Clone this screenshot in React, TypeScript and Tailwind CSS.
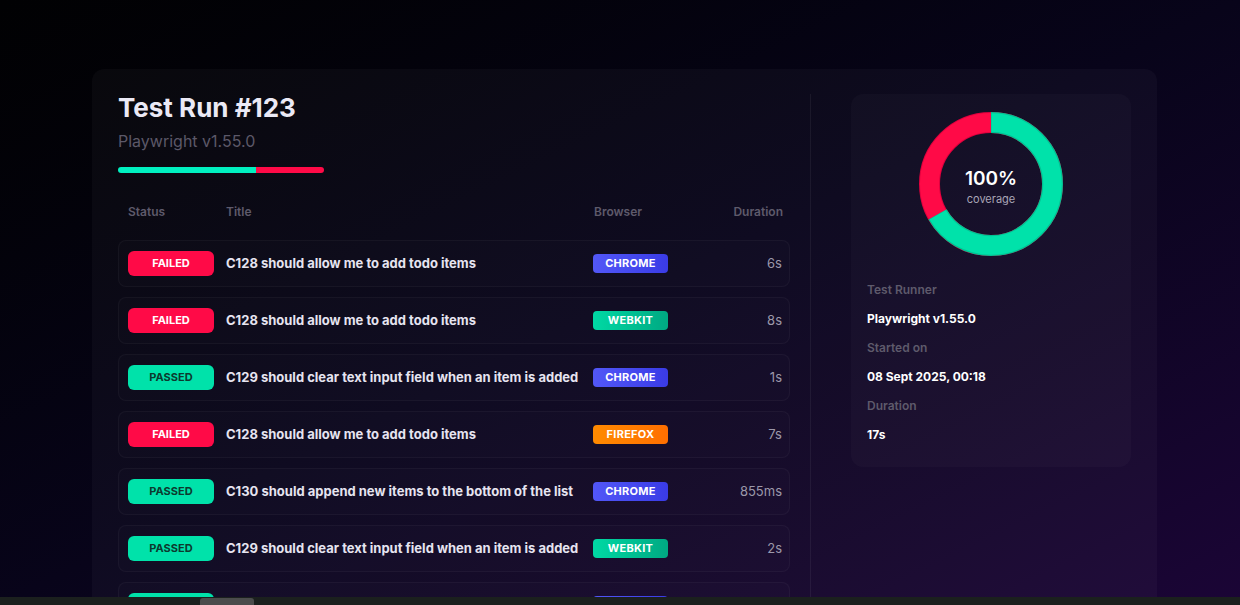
import React from "react";

interface TestRow {
    status: "FAILED" | "PASSED";
    title: string;
    browser: "CHROME" | "WEBKIT" | "FIREFOX";
    duration: string;
}

const rows: TestRow[] = [
    { status: "FAILED", title: "C128 should allow me to add todo items", browser: "CHROME", duration: "6s" },
    { status: "FAILED", title: "C128 should allow me to add todo items", browser: "WEBKIT", duration: "8s" },
    { status: "PASSED", title: "C129 should clear text input field when an item is added", browser: "CHROME", duration: "1s" },
    { status: "FAILED", title: "C128 should allow me to add todo items", browser: "FIREFOX", duration: "7s" },
    { status: "PASSED", title: "C130 should append new items to the bottom of the list", browser: "CHROME", duration: "855ms" },
    { status: "PASSED", title: "C129 should clear text input field when an item is added", browser: "WEBKIT", duration: "2s" },
    { status: "PASSED", title: "C131 should trim text input", browser: "CHROME", duration: "1s" },
];

const browserClass: Record<TestRow["browser"], string> = {
    CHROME: "bg-gradient-to-r from-[#5257f7] to-[#3a3be6]",
    WEBKIT: "bg-gradient-to-r from-[#00d9a4] to-[#00a982]",
    FIREFOX: "bg-gradient-to-r from-[#ff8a00] to-[#ff6f00]",
};

function Donut() {
    const r = 61.5;
    const c = 2 * Math.PI * r;
    const green = (c * 2) / 3;

    return (
        <div className="relative h-[144px] w-[144px]">
            <svg width="144" height="144" viewBox="0 0 144 144" className="-rotate-90">
                <circle cx="72" cy="72" r={r} fill="none" stroke="#e0003e" strokeWidth="21" />
                <circle cx="72" cy="72" r={r} fill="none" stroke="#ff0a47" strokeWidth="19" />
                <circle
                    cx="72"
                    cy="72"
                    r={r}
                    fill="none"
                    stroke="#00c293"
                    strokeWidth="21"
                    strokeDasharray={`${green} ${c}`}
                />
                <circle
                    cx="72"
                    cy="72"
                    r={r}
                    fill="none"
                    stroke="#00e2aa"
                    strokeWidth="18.5"
                    strokeDasharray={`${green - 1} ${c}`}
                    strokeDashoffset="-0.5"
                />
            </svg>
            <div className="absolute inset-0 flex flex-col items-center justify-center pt-[6px]">
                <span className="text-[19px] font-semibold leading-6 text-white">100%</span>
                <span className="text-[11px] leading-4 text-[#a9a5b6]">coverage</span>
            </div>
        </div>
    );
}

export default function App() {
    return (
        <div
            className="relative h-screen overflow-hidden bg-gradient-to-br from-[#010103] via-[#08041a] to-[#1b0536] pt-[69px] font-['Inter',sans-serif]"
        >
            <div className="ml-[92px] flex w-[1065px] rounded-xl bg-white/[0.03] px-[26px] pt-[25px] min-h-[560px]">

                {/* left column */}
                <div className="flex-1 pr-5">
                    <h1 className="text-[26px] font-bold leading-7 text-[#ebe9f5]">
                        Test Run #123
                    </h1>
                    <p className="mt-[7px] text-[16px] leading-6 text-[#5c5868]">
                        Playwright v1.55.0
                    </p>

                    <div className="mt-[14px] flex h-[6px] w-[206px] overflow-hidden rounded-full">
                        <div className="w-[138px] bg-[#00f0c0]" />
                        <div className="flex-1 bg-[#ff0a47]" />
                    </div>

                    <div className="mt-[31px] flex pl-[10px] pr-[7px] text-[12px] font-semibold leading-4 text-[#5e5a6b]">
                        <div className="w-[98px]">Status</div>
                        <div className="flex-1">Title</div>
                        <div className="w-[120px]">Browser</div>
                        <div className="w-[69px] text-right">Duration</div>
                    </div>

                    <div className="mt-[20px] flex flex-col gap-[10px]">
                        {rows.map((row, i) => (
                            <div
                                key={i}
                                className="flex h-[47px] items-center rounded-lg border border-white/[0.035] bg-white/[0.012] pl-[9px] pr-[7px]"
                            >
                                <div className="w-[98px]">
                                    <span
                                        className={`flex h-[25px] w-[86px] items-center justify-center rounded-md text-[11px] font-bold ${
                                            row.status === "FAILED"
                                                ? "bg-[#ff0a47] text-white"
                                                : "bg-[#00e2aa] text-[#0c3a2f]"
                                        }`}
                                    >
                                        {row.status}
                                    </span>
                                </div>
                                <div className="flex-1 text-[13px] font-bold text-[#e6e4f0]">
                                    {row.title}
                                </div>
                                <div className="w-[120px]">
                                    <span
                                        className={`flex h-[19px] w-[75px] items-center justify-center rounded-[4px] text-[11px] font-bold tracking-wide text-white ${browserClass[row.browser]}`}
                                    >
                                        {row.browser}
                                    </span>
                                </div>
                                <div className="w-[69px] text-right text-[13px] text-[#9c98aa]">
                                    {row.duration}
                                </div>
                            </div>
                        ))}
                    </div>
                </div>

                {/* divider */}
                <div className="w-px bg-white/[0.06]" />

                {/* right column */}
                <div className="w-[320px] pl-10">
                    <div className="flex flex-col rounded-xl bg-white/[0.025] px-4 pb-[22px] pt-[18px]">
                        <div className="flex justify-center">
                            <Donut />
                        </div>

                        <div className="mt-6 flex flex-col gap-[9px] leading-5">
                            <span className="text-[12px] font-semibold text-[#5e5a6b]">Test Runner</span>
                            <span className="text-[12px] font-bold text-white">Playwright v1.55.0</span>
                            <span className="text-[12px] font-semibold text-[#5e5a6b]">Started on</span>
                            <span className="text-[12px] font-bold text-white">08 Sept 2025, 00:18</span>
                            <span className="text-[12px] font-semibold text-[#5e5a6b]">Duration</span>
                            <span className="text-[12px] font-bold text-white">17s</span>
                        </div>
                    </div>
                </div>
            </div>

            {/* bottom strip */}
            <div className="absolute bottom-0 left-0 right-0 h-[8px] bg-[#1b201e]">
                <div className="ml-[200px] mt-[1px] h-[7px] w-[54px] rounded-t-[3px] bg-[#4b4c4c]" />
            </div>
        </div>
    );
}
